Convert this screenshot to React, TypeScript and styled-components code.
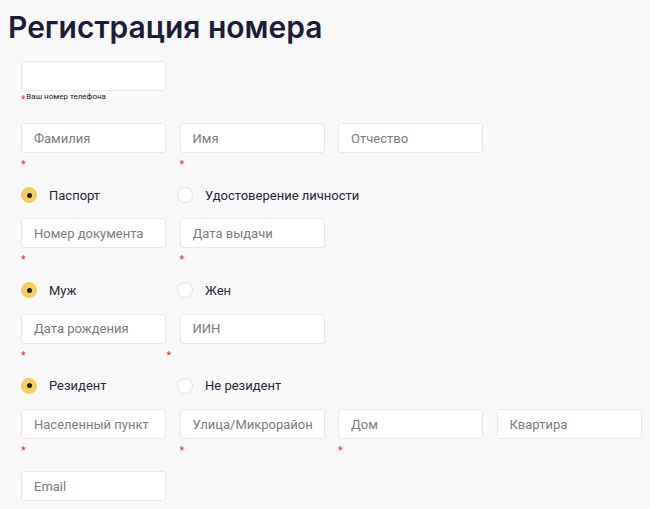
import React from 'react';
import styled, { createGlobalStyle } from 'styled-components';

const GlobalStyle = createGlobalStyle`
  html, body {
    margin: 0;
    padding: 0;
    background: #f8f8f8;
  }
  body {
    font-family: Roboto, "Liberation Sans", sans-serif;
  }
  * {
    box-sizing: border-box;
  }
`;

const Page = styled.div`
  padding: 8px;
`;

const Title = styled.h1`
  margin: 1px 0 16px;
  font-family: Inter, Roboto, sans-serif;
  font-size: 30px;
  line-height: 36px;
  font-weight: 600;
  color: #1b1d36;
`;

// Ряд полей — 4 колонки по ширине контейнера
const FieldRow = styled.div`
  display: grid;
  grid-template-columns: repeat(4, 1fr);
  margin-bottom: 21px;
`;

const Field = styled.div`
  padding-left: 13px;
`;

const Input = styled.input`
  display: block;
  width: 145px;
  height: 30px;
  padding: 0 0 0 12px;
  background: #fff;
  border: 1px solid #e8e8e8;
  border-radius: 3px;
  font-family: Roboto, "Liberation Sans", sans-serif;
  font-size: 13px;
  color: #333;
  outline: none;

  &::placeholder {
    color: #7b7b7b;
  }
`;

const Sub = styled.div`
  height: 11px;
  font-size: 8px;
  line-height: 11px;
  color: #1b1d36;
  white-space: nowrap;
`;

const Star = styled.span<{ $low?: boolean }>`
  display: inline-block;
  color: #f22;
  font-size: ${({ $low }) => ($low ? '10px' : '11px')};
  line-height: 11px;
  vertical-align: top;
  margin-top: ${({ $low }) => ($low ? '3px' : '6px')};
  margin-right: 1px;
`;

// Переключатели
const RadioRow = styled.div`
  display: flex;
  height: 20px;
  align-items: center;
  padding-left: 13px;
  margin-bottom: 13.4px;
`;

const RadioItem = styled.label`
  display: flex;
  align-items: center;
  width: 156px;
  gap: 12px;
  font-size: 13px;
  color: #2a2438;
  white-space: nowrap;
  cursor: pointer;
`;

const RadioMark = styled.span<{ $checked?: boolean }>`
  width: 16px;
  height: 16px;
  border-radius: 50%;
  flex-shrink: 0;
  display: flex;
  align-items: center;
  justify-content: center;
  background: ${({ $checked }) => ($checked ? '#f6d158' : '#fff')};
  border: 1px solid ${({ $checked }) => ($checked ? '#f0ca4c' : '#e2e2e2')};

  &::after {
    content: '';
    display: ${({ $checked }) => ($checked ? 'block' : 'none')};
    width: 5px;
    height: 5px;
    border-radius: 50%;
    background: #1e1e2c;
  }
`;

type F = { ph: string; req?: boolean };

const Fields = ({ items }: { items: F[] }) => (
  <FieldRow>
    {items.map((f) => (
      <Field key={f.ph}>
        <Input placeholder={f.ph} />
        <Sub>{f.req && <Star>*</Star>}</Sub>
      </Field>
    ))}
  </FieldRow>
);

const Radios = ({ items, checked }: { items: string[]; checked: number }) => (
  <RadioRow>
    {items.map((label, i) => (
      <RadioItem key={label}>
        <RadioMark $checked={i === checked} />
        {label}
      </RadioItem>
    ))}
  </RadioRow>
);

export default function App() {
  return (
    <Page>
      <GlobalStyle />
      <Title>Регистрация номера</Title>

      <FieldRow>
        <Field>
          <Input />
          <Sub>
            <Star $low>*</Star>Ваш номер телефона
          </Sub>
        </Field>
      </FieldRow>

      <Fields
        items={[
          { ph: 'Фамилия', req: true },
          { ph: 'Имя', req: true },
          { ph: 'Отчество' },
        ]}
      />

      <Radios items={['Паспорт', 'Удостоверение личности']} checked={0} />

      <Fields
        items={[
          { ph: 'Номер документа', req: true },
          { ph: 'Дата выдачи', req: true },
        ]}
      />

      <Radios items={['Муж', 'Жен']} checked={0} />

      <FieldRow>
        <Field>
          <Input placeholder="Дата рождения" />
          <Sub>
            <Star>*</Star>
          </Sub>
        </Field>
        <Field style={{ paddingLeft: 0 }}>
          <Input placeholder="ИИН" style={{ marginLeft: 13 }} />
          <Sub>
            <Star>*</Star>
          </Sub>
        </Field>
      </FieldRow>

      <Radios items={['Резидент', 'Не резидент']} checked={0} />

      <Fields
        items={[
          { ph: 'Населенный пункт', req: true },
          { ph: 'Улица/Микрорайон', req: true },
          { ph: 'Дом', req: true },
          { ph: 'Квартира' },
        ]}
      />

      <Fields items={[{ ph: 'Email' }]} />
    </Page>
  );
}
